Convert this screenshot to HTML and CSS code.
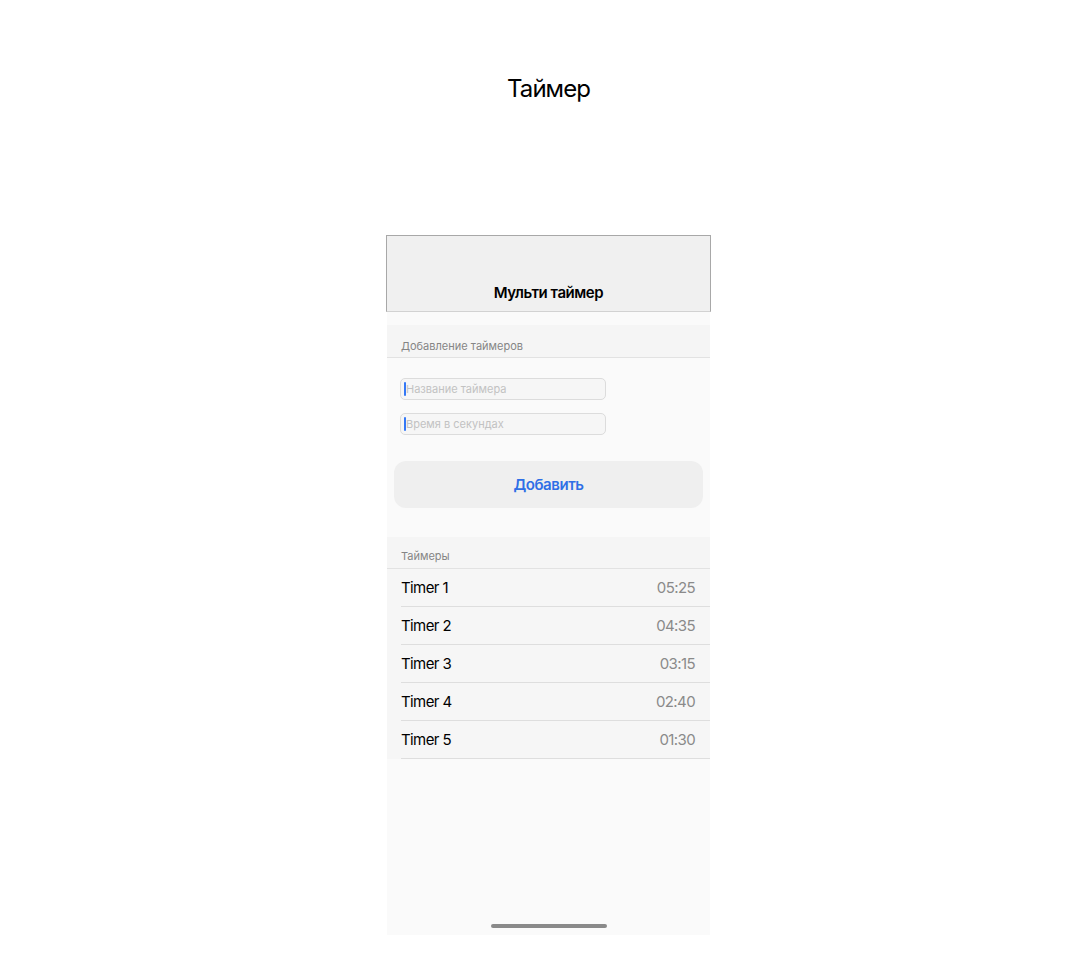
FILE: index.html
```html
<!DOCTYPE html>
<html lang="ru">
<head>
<meta charset="utf-8">
<title>Таймер</title>
<link rel="stylesheet" href="styles.css">
</head>
<body>
<div class="page">
  <h1 class="page-title">Таймер</h1>
  <div class="phone">
    <header class="nav">
      <div class="nav-title">Мульти таймер</div>
    </header>
    <div class="screen">
      <div class="section-head first">Добавление таймеров</div>
      <div class="form">
        <div class="input"><span class="caret"></span><span class="ph">Название таймера</span></div>
        <div class="input"><span class="caret"></span><span class="ph">Время в секундах</span></div>
        <div class="btn">Добавить</div>
      </div>
      <div class="section-head second">Таймеры</div>
      <ul class="list">
        <li class="row"><span class="name">Timer 1</span><span class="time">05:25</span></li>
        <li class="row"><span class="name">Timer 2</span><span class="time">04:35</span></li>
        <li class="row"><span class="name">Timer 3</span><span class="time">03:15</span></li>
        <li class="row"><span class="name">Timer 4</span><span class="time">02:40</span></li>
        <li class="row"><span class="name">Timer 5</span><span class="time">01:30</span></li>
      </ul>
      <div class="spacer"></div>
      <div class="home"></div>
    </div>
  </div>
</div>
</body>
</html>
```

FILE: styles.css
```css
html, body {
  margin: 0;
  padding: 0;
  background: #ffffff;
  font-family: Inter, "Noto Sans", sans-serif;
  color: #000;
}

.page {
  padding-left: 15px;
  display: flex;
  flex-direction: column;
  align-items: center;
}

.page-title {
  margin: 75px 0 0;
  font-size: 24px;
  line-height: 28px;
  font-weight: 400;
  letter-spacing: -0.04em;
}

.phone {
  margin-top: 132px;
  width: 325px;
  display: flex;
  flex-direction: column;
}

.nav {
  background: #f0f0f0;
  border: 1px solid #a8a8a8;
  border-bottom: 1px solid #d2d2d2;
  box-sizing: border-box;
  height: 77px;
  display: flex;
  align-items: flex-end;
  justify-content: center;
  padding-bottom: 9px;
}

.nav-title {
  font-size: 15px;
  font-weight: 600;
  line-height: 18px;
  letter-spacing: -0.03em;
}

.screen {
  margin: 0 1px;
  background: #fafafa;
  height: 623px;
  display: flex;
  flex-direction: column;
}

.section-head {
  height: 32px;
  box-sizing: border-box;
  background: #f5f5f5;
  border-bottom: 1px solid #e2e2e2;
  font-size: 11px;
  color: #858585;
  padding: 13px 0 0 14px;
  line-height: 14px;
}

.section-head.first {
  margin-top: 13px;
  height: 33px;
  padding-top: 14px;
}

.section-head.second {
  padding-top: 12px;
}

.form {
  padding: 20px 7px 29px;
  display: flex;
  flex-direction: column;
}

.input {
  margin-left: 6px;
  width: 206px;
  height: 22px;
  box-sizing: border-box;
  border: 1px solid #dcdcdc;
  border-radius: 5px;
  background: #f6f6f6;
  display: flex;
  align-items: center;
  padding-left: 3px;
  margin-bottom: 13px;
}

.caret {
  width: 2px;
  height: 14px;
  background: #3478f6;
  border-radius: 1px;
}

.ph {
  font-size: 11px;
  color: #c2c2c2;
}

.btn {
  margin-top: 13px;
  height: 47px;
  border-radius: 12px;
  background: #efefef;
  display: flex;
  align-items: center;
  justify-content: center;
  font-size: 15px;
  font-weight: 600;
  color: #2f6fe6;
  letter-spacing: -0.03em;
}

.list {
  list-style: none;
  margin: 0;
  padding: 0;
  background: #f6f6f6;
}

.row {
  margin-left: 14px;
  height: 38px;
  box-sizing: border-box;
  border-bottom: 1px solid #dedede;
  display: flex;
  align-items: center;
  justify-content: space-between;
  padding-right: 15px;
  font-size: 15px;
  letter-spacing: -0.04em;
}

.name {
  color: #000;
}

.time {
  color: #8a8a8a;
}

.spacer {
  flex: 1;
}

.home {
  align-self: center;
  width: 116px;
  height: 4px;
  border-radius: 2px;
  background: #8a8a8a;
  margin-bottom: 7px;
}
```
